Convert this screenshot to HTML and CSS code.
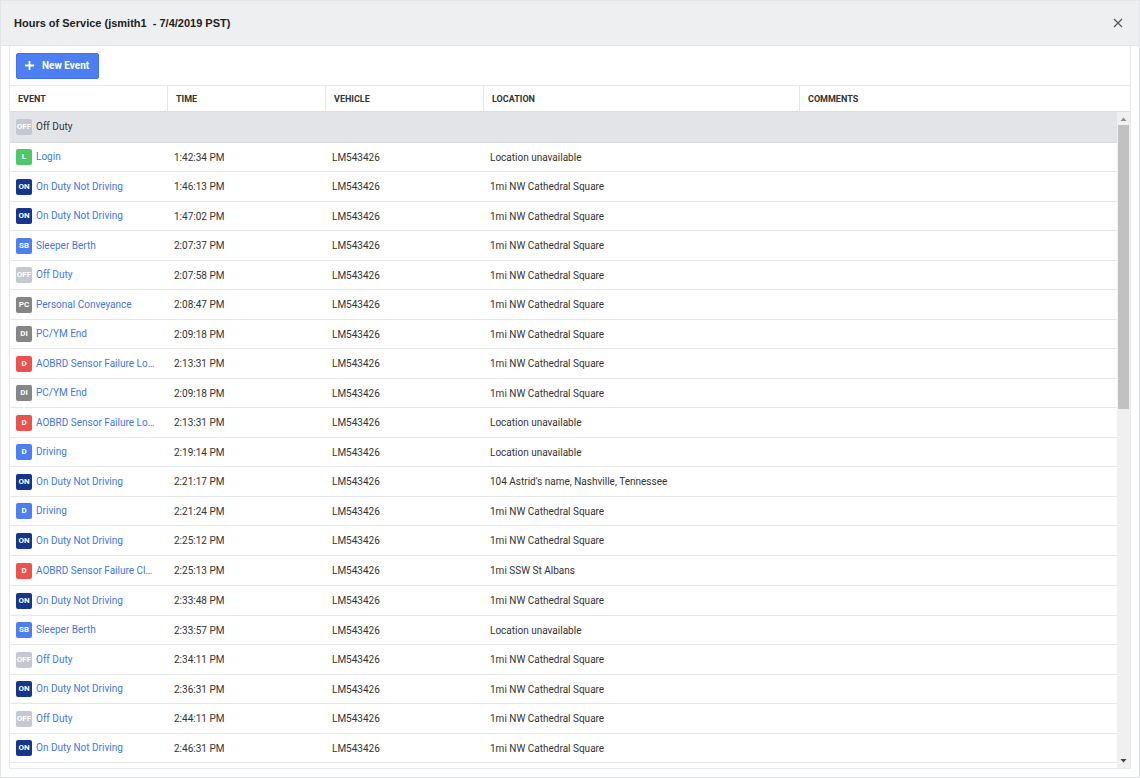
FILE: index.html
```
<!DOCTYPE html>
<html lang="en">
<head>
    <meta charset="utf-8">
    <title>Hours of Service</title>
    <link rel="stylesheet" href="styles.css">
</head>
<body>
    <div class="modal">
        <header class="modal-header">
            <h1>Hours of Service (jsmith1&nbsp; - 7/4/2019 PST)</h1>
            <button class="close" aria-label="Close">
                <svg width="10" height="10" viewBox="0 0 10 10"><path d="M1 1l8 8M9 1l-8 8" stroke="#55585c" stroke-width="1.2" fill="none"/></svg>
            </button>
        </header>

        <div class="panel">
            <div class="toolbar">
                <button class="new-event">
                    <svg width="9" height="9" viewBox="0 0 9 9"><path d="M4.500 0v9M0 4.500h9" stroke="#fff" stroke-width="1.800"/></svg>
                    New Event
                </button>
            </div>

            <div class="grid">
                <table>
                    <colgroup>
                        <col class="col"><col class="col"><col class="col"><col class="col-wide"><col>
                    </colgroup>
                    <thead>
                        <tr><th>EVENT</th><th>TIME</th><th>VEHICLE</th><th>LOCATION</th><th>COMMENTS</th></tr>
                    </thead>
                    <tbody>
                        <tr class="selected"><td><div class="event"><span class="badge off">OFF</span><span>Off Duty</span></div></td><td></td><td></td><td></td><td></td></tr>
                        <tr><td><div class="event"><span class="badge login">L</span><a href="#">Login</a></div></td><td>1:42:34 PM</td><td>LM543426</td><td>Location unavailable</td><td></td></tr>
                        <tr><td><div class="event"><span class="badge on">ON</span><a href="#">On Duty Not Driving</a></div></td><td>1:46:13 PM</td><td>LM543426</td><td>1mi NW Cathedral Square</td><td></td></tr>
                        <tr><td><div class="event"><span class="badge on">ON</span><a href="#">On Duty Not Driving</a></div></td><td>1:47:02 PM</td><td>LM543426</td><td>1mi NW Cathedral Square</td><td></td></tr>
                        <tr><td><div class="event"><span class="badge blue">SB</span><a href="#">Sleeper Berth</a></div></td><td>2:07:37 PM</td><td>LM543426</td><td>1mi NW Cathedral Square</td><td></td></tr>
                        <tr><td><div class="event"><span class="badge off">OFF</span><a href="#">Off Duty</a></div></td><td>2:07:58 PM</td><td>LM543426</td><td>1mi NW Cathedral Square</td><td></td></tr>
                        <tr><td><div class="event"><span class="badge gray">PC</span><a href="#">Personal Conveyance</a></div></td><td>2:08:47 PM</td><td>LM543426</td><td>1mi NW Cathedral Square</td><td></td></tr>
                        <tr><td><div class="event"><span class="badge gray">DI</span><a href="#">PC/YM End</a></div></td><td>2:09:18 PM</td><td>LM543426</td><td>1mi NW Cathedral Square</td><td></td></tr>
                        <tr><td><div class="event"><span class="badge red">D</span><a href="#">AOBRD Sensor Failure Lo…</a></div></td><td>2:13:31 PM</td><td>LM543426</td><td>1mi NW Cathedral Square</td><td></td></tr>
                        <tr><td><div class="event"><span class="badge gray">DI</span><a href="#">PC/YM End</a></div></td><td>2:09:18 PM</td><td>LM543426</td><td>1mi NW Cathedral Square</td><td></td></tr>
                        <tr><td><div class="event"><span class="badge red">D</span><a href="#">AOBRD Sensor Failure Lo…</a></div></td><td>2:13:31 PM</td><td>LM543426</td><td>Location unavailable</td><td></td></tr>
                        <tr><td><div class="event"><span class="badge blue">D</span><a href="#">Driving</a></div></td><td>2:19:14 PM</td><td>LM543426</td><td>Location unavailable</td><td></td></tr>
                        <tr><td><div class="event"><span class="badge on">ON</span><a href="#">On Duty Not Driving</a></div></td><td>2:21:17 PM</td><td>LM543426</td><td>104 Astrid's name, Nashville, Tennessee</td><td></td></tr>
                        <tr><td><div class="event"><span class="badge blue">D</span><a href="#">Driving</a></div></td><td>2:21:24 PM</td><td>LM543426</td><td>1mi NW Cathedral Square</td><td></td></tr>
                        <tr><td><div class="event"><span class="badge on">ON</span><a href="#">On Duty Not Driving</a></div></td><td>2:25:12 PM</td><td>LM543426</td><td>1mi NW Cathedral Square</td><td></td></tr>
                        <tr><td><div class="event"><span class="badge red">D</span><a href="#">AOBRD Sensor Failure Cl…</a></div></td><td>2:25:13 PM</td><td>LM543426</td><td>1mi SSW St Albans</td><td></td></tr>
                        <tr><td><div class="event"><span class="badge on">ON</span><a href="#">On Duty Not Driving</a></div></td><td>2:33:48 PM</td><td>LM543426</td><td>1mi NW Cathedral Square</td><td></td></tr>
                        <tr><td><div class="event"><span class="badge blue">SB</span><a href="#">Sleeper Berth</a></div></td><td>2:33:57 PM</td><td>LM543426</td><td>Location unavailable</td><td></td></tr>
                        <tr><td><div class="event"><span class="badge off">OFF</span><a href="#">Off Duty</a></div></td><td>2:34:11 PM</td><td>LM543426</td><td>1mi NW Cathedral Square</td><td></td></tr>
                        <tr><td><div class="event"><span class="badge on">ON</span><a href="#">On Duty Not Driving</a></div></td><td>2:36:31 PM</td><td>LM543426</td><td>1mi NW Cathedral Square</td><td></td></tr>
                        <tr><td><div class="event"><span class="badge off">OFF</span><a href="#">Off Duty</a></div></td><td>2:44:11 PM</td><td>LM543426</td><td>1mi NW Cathedral Square</td><td></td></tr>
                        <tr><td><div class="event"><span class="badge on">ON</span><a href="#">On Duty Not Driving</a></div></td><td>2:46:31 PM</td><td>LM543426</td><td>1mi NW Cathedral Square</td><td></td></tr>
                    </tbody>
                </table>

                <div class="scrollbar">
                    <svg class="arrow" width="13" height="13" viewBox="0 0 13 13"><path d="M3.500 9h6L6.500 5.500z" fill="#909090"/></svg>
                    <div class="track"><div class="thumb"></div></div>
                    <svg class="arrow" width="13" height="13" viewBox="0 0 13 13"><path d="M3.500 4h6L6.500 7.500z" fill="#404040"/></svg>
                </div>
            </div>
        </div>
    </div>
</body>
</html>
```
FILE: styles.css
```
* {
    box-sizing: border-box;
}

body {
    margin: 0;
    font-family: Roboto, Arial, sans-serif;
    font-size: 10px;
    color: #333;
    background: #fff;
}

.modal {
    display: flex;
    flex-direction: column;
    min-height: 100vh;
    border: 1px solid #e2e3e7;
}

.modal-header {
    display: flex;
    align-items: center;
    justify-content: space-between;
    height: 45px;
    padding: 0 15px 0 13px;
    background: #eeeff1;
    border-bottom: 1px solid #e2e3e7;
}

h1 {
    margin: 0;
    font-family: "Liberation Sans", Arial, sans-serif;
    font-size: 11px;
    font-weight: 700;
    color: #222;
}

button {
    font-family: inherit;
    cursor: pointer;
}

.close {
    display: flex;
    padding: 1px;
    border: 0;
    background: none;
}

.panel {
    display: flex;
    flex-direction: column;
    flex: 1;
    margin: 0 8px 8px;
    border: 1px solid #e8e9ec;
    border-top: 0;
}

.toolbar {
    padding: 7px 6px 6px;
}

.new-event {
    display: flex;
    align-items: center;
    gap: 8px;
    height: 26px;
    padding: 0 9px 1px 8px;
    border: 1px solid #3f73ee;
    border-radius: 2px;
    background: #4d7ff3;
    color: #fff;
    font-size: 10px;
    font-weight: 700;
}

.grid {
    position: relative;
    flex: 1;
}

table {
    width: 100%;
    table-layout: fixed;
    border-collapse: separate;
    border-spacing: 0;
}

.col {
    width: 158px;
}

.col-wide {
    width: 316px;
}

th {
    height: 27px;
    padding: 0 8px;
    border-top: 1px solid #e6e7ea;
    border-right: 1px solid #e6e7ea;
    border-bottom: 1px solid #dcdde1;
    font-size: 9px;
    font-weight: 700;
    text-align: left;
}

th:last-child {
    border-right: 0;
}

td {
    height: 30px;
    padding: 0 6px;
    border-bottom: 1px solid #e6e7ea;
    white-space: nowrap;
}

/* rows average a little over 29px */
tr:nth-child(even):not(:nth-child(16n)) td {
    height: 29px;
}

tr.selected td {
    height: 31px;
    background: #e3e4e8;
    border-bottom-color: #d8d9dd;
}

.event {
    display: flex;
    gap: 4px;
    line-height: 15px;
}

a {
    color: #3f76ee;
    text-decoration: none;
}

.badge {
    flex: none;
    width: 16px;
    height: 16px;
    border-radius: 2px;
    color: #fff;
    font-size: 8px;
    font-weight: 700;
    line-height: 16px;
    text-align: center;
}

.off {
    background: #c5c8d1;
}

.login {
    background: #50c66b;
}

.on {
    background: #15368c;
}

.blue {
    background: #4d7ff3;
}

.gray {
    background: #868686;
}

.red {
    background: #ec524d;
}

.scrollbar {
    position: absolute;
    top: 27px;
    right: 0;
    bottom: 0;
    display: flex;
    flex-direction: column;
    width: 13px;
    background: #f0f0f0;
}

.arrow {
    display: block;
}

.track {
    flex: 1;
    padding: 0 1px;
}

.thumb {
    height: 45%;
    background: #c1c1c1;
}
```
